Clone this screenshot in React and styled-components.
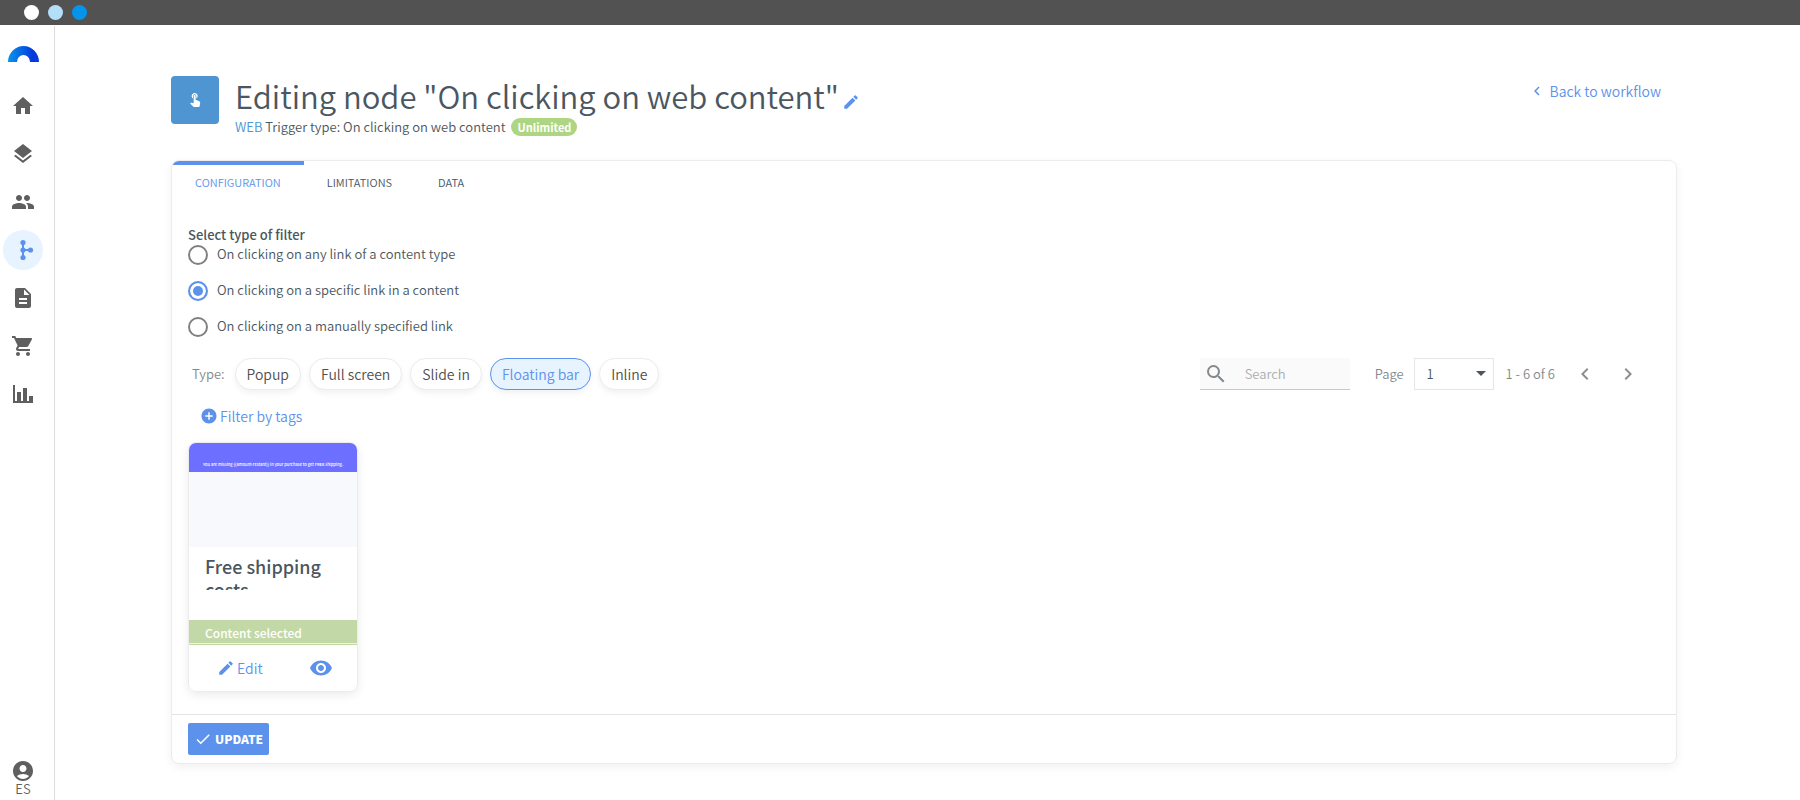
import React, { useState } from 'react';
import { styled, createGlobalStyle } from 'styled-components';
import {
  MdHome,
  MdLayers,
  MdPeople,
  MdDescription,
  MdShoppingCart,
  MdAccountCircle,
  MdTouchApp,
  MdEdit,
  MdSearch,
  MdVisibility,
  MdAddCircle,
  MdCheck,
  MdChevronLeft,
  MdChevronRight,
  MdArrowDropDown,
} from 'react-icons/md';

const WorkflowIcon = () => (
  <svg width="24" height="24" viewBox="0 0 24 24" fill="currentColor" aria-hidden="true">
    <circle cx="12" cy="4.5" r="2.6" />
    <circle cx="12" cy="12" r="2.6" />
    <circle cx="12" cy="19.5" r="2.6" />
    <circle cx="19.5" cy="12" r="2.6" />
    <path d="M11 4h2v16h-2zM12 11h8v2h-8z" />
  </svg>
);

const ChartIcon = () => (
  <svg width="24" height="24" viewBox="0 0 24 24" fill="currentColor" aria-hidden="true">
    <path d="M2 3h2v16h2v-9h4v9h2V6h4v13h2v-5h4v7H2z" />
  </svg>
);

const LogoIcon = () => (
  <svg width="31" height="16" viewBox="0 0 31 16" aria-hidden="true">
    <defs>
      <linearGradient id="logo" x1="0" y1="0" x2="1" y2="0">
        <stop offset="0" stopColor="#0a94ea" />
        <stop offset="0.45" stopColor="#0763e2" />
        <stop offset="0.8" stopColor="#0537dc" />
        <stop offset="1" stopColor="#0440dd" />
      </linearGradient>
    </defs>
    <path d="M0 16a15.5 16 0 0 1 31 0h-9a6.5 7 0 0 0-13 0z" fill="url(#logo)" />
  </svg>
);

const menu = [
  { name: 'Home', icon: <MdHome /> },
  { name: 'Layers', icon: <MdLayers /> },
  { name: 'People', icon: <MdPeople /> },
  { name: 'Workflows', icon: <WorkflowIcon />, active: true },
  { name: 'Documents', icon: <MdDescription /> },
  { name: 'Shop', icon: <MdShoppingCart /> },
  { name: 'Statistics', icon: <ChartIcon /> },
];

const tabs = ['CONFIGURATION', 'LIMITATIONS', 'DATA'];

const filters = [
  'On clicking on any link of a content type',
  'On clicking on a specific link in a content',
  'On clicking on a manually specified link',
];

const types = ['Popup', 'Full screen', 'Slide in', 'Floating bar', 'Inline'];

const App = () => {
  const [tab, setTab] = useState(tabs[0]);
  const [filter, setFilter] = useState(filters[1]);
  const [type, setType] = useState('Floating bar');

  return (
    <Page>
      <GlobalStyle />
      <WindowBar>
        <Dot $color="#ffffff" />
        <Dot $color="#b3dff9" />
        <Dot $color="#0394ec" />
      </WindowBar>
      <Body>
        <Sidebar>
          <Logo href="#" aria-label="Start">
            <LogoIcon />
          </Logo>
          {menu.map((item) => (
            <MenuItem key={item.name} href="#" aria-label={item.name} $active={item.active}>
              {item.icon}
            </MenuItem>
          ))}
          <Account href="#">
            <MdAccountCircle />
            ES
          </Account>
        </Sidebar>
        <Main>
          <Header>
            <NodeIcon>
              <MdTouchApp />
            </NodeIcon>
            <HeaderText>
              <TitleRow>
                <Title>Editing node "On clicking on web content"</Title>
                <RenameButton aria-label="Rename" $size="18px" $color="#5c92ec">
                  <MdEdit />
                </RenameButton>
              </TitleRow>
              <Subtitle>
                <span>
                  <Channel>WEB</Channel> Trigger type: On clicking on web content
                </span>
                <Badge>Unlimited</Badge>
              </Subtitle>
            </HeaderText>
            <BackLink href="#">
              <MdChevronLeft />
              Back to workflow
            </BackLink>
          </Header>

          <Panel>
            <Tabs role="tablist">
              {tabs.map((name) => (
                <Tab
                  key={name}
                  role="tab"
                  aria-selected={tab === name}
                  $active={tab === name}
                  onClick={() => setTab(name)}
                >
                  {name}
                </Tab>
              ))}
            </Tabs>
            <Content>
              <Filters>
                <Legend>Select type of filter</Legend>
                {filters.map((name) => (
                  <RadioLabel key={name}>
                    <Radio
                      type="radio"
                      name="filter"
                      checked={filter === name}
                      onChange={() => setFilter(name)}
                    />
                    {name}
                  </RadioLabel>
                ))}
              </Filters>

              <Toolbar>
                <Chips>
                  <ChipsLabel>Type:</ChipsLabel>
                  {types.map((name) => (
                    <Chip key={name} $active={type === name} onClick={() => setType(name)}>
                      {name}
                    </Chip>
                  ))}
                </Chips>
                <Search>
                  <MdSearch />
                  <SearchInput type="text" placeholder="Search" aria-label="Search" />
                </Search>
                <Pager>
                  <label htmlFor="page">Page</label>
                  <SelectBox>
                    <Select id="page">
                      <option>1</option>
                    </Select>
                    <MdArrowDropDown />
                  </SelectBox>
                  <span>1 - 6 of 6</span>
                  <PagerArrows>
                    <IconButton aria-label="Previous page" $size="24px" $color="#8b8f93">
                      <MdChevronLeft />
                    </IconButton>
                    <IconButton aria-label="Next page" $size="24px" $color="#8b8f93">
                      <MdChevronRight />
                    </IconButton>
                  </PagerArrows>
                </Pager>
              </Toolbar>

              <TagsButton>
                <MdAddCircle />
                Filter by tags
              </TagsButton>

              <Card>
                <Preview>
                  <PreviewBar>
                    {'You are missing {{amount-restant}} in your purchase to get FREE shipping.'}
                  </PreviewBar>
                </Preview>
                <CardText>
                  <CardTitle>Free shipping costs</CardTitle>
                </CardText>
                <Selected>Content selected</Selected>
                <CardActions>
                  <EditButton>
                    <MdEdit />
                    Edit
                  </EditButton>
                  <IconButton aria-label="Preview" $size="24px" $color="#5c92ec">
                    <MdVisibility />
                  </IconButton>
                </CardActions>
              </Card>
            </Content>
            <Footer>
              <UpdateButton>
                <MdCheck />
                UPDATE
              </UpdateButton>
            </Footer>
          </Panel>
        </Main>
      </Body>
    </Page>
  );
};

export default App;

const GlobalStyle = createGlobalStyle`
  * {
    box-sizing: border-box;
  }
  body {
    margin: 0;
    background: #fff;
    color: #4a5660;
    font-family: 'Noto Sans CJK SC', 'Noto Sans', sans-serif;
    font-size: 13px;
    font-weight: 350;
    line-height: 20px;
  }
  button, input, select {
    font: inherit;
    color: inherit;
    margin: 0;
  }
  button {
    cursor: pointer;
  }
  a {
    text-decoration: none;
  }
  svg {
    display: block;
    flex: none;
  }
`;
const Page = styled.div`
  display: flex;
  flex-direction: column;
  min-height: 100vh;
`;
const WindowBar = styled.div`
  display: flex;
  align-items: center;
  gap: 9px;
  height: 25px;
  padding-left: 24px;
  background: #525252;
`;
const Dot = styled.span`
  width: 15px;
  height: 15px;
  border-radius: 50%;
  background: ${({ $color }) => $color};
`;
const Body = styled.div`
  flex: 1;
  display: flex;
`;
const Sidebar = styled.nav`
  display: flex;
  flex-direction: column;
  flex: none;
  width: 55px;
  margin-top: 1px;
  padding: 20px 0 0 3px;
  border-right: 1px solid #dcdcdc;
  font-size: 24px;
`;
const Logo = styled.a`
  margin: 0 0 24px 5px;
`;
const MenuItem = styled.a`
  display: flex;
  align-items: center;
  justify-content: center;
  width: 40px;
  height: 40px;
  margin-bottom: 8px;
  border-radius: 50%;
  color: ${({ $active }) => ($active ? '#5c92ec' : '#5f5f5f')};
  background: ${({ $active }) => ($active ? '#e7f3ff' : 'transparent')};
`;
const Account = styled.a`
  display: flex;
  flex-direction: column;
  align-items: center;
  width: 40px;
  margin-top: auto;
  padding-bottom: 6px;
  color: #5f5f5f;
  font-size: 13px;
  line-height: 11px;
  svg {
    font-size: 24px;
  }
`;
const Main = styled.main`
  flex: 1;
  min-width: 0;
  padding: 51px 123px 36px 116px;
`;
const Header = styled.header`
  display: flex;
  align-items: flex-start;
  margin-bottom: 24px;
`;
const NodeIcon = styled.div`
  display: flex;
  align-items: center;
  justify-content: center;
  width: 48px;
  height: 48px;
  padding-bottom: 2px;
  border-radius: 4px;
  background: #4e95d2;
  color: #fff;
  font-size: 16px;
`;
const HeaderText = styled.div`
  flex: 1;
  padding-left: 16px;
`;
const TitleRow = styled.div`
  display: flex;
  align-items: flex-end;
  gap: 3px;
  height: 42px;
`;
const Title = styled.h1`
  margin: 0;
  font-size: 31px;
  font-weight: 350;
  line-height: 44px;
`;
const IconButton = styled.button`
  padding: 0;
  border: none;
  background: none;
  font-size: ${({ $size }) => $size};
  color: ${({ $color }) => $color};
`;
const RenameButton = styled(IconButton)`
  padding-bottom: 7px;
`;
const Subtitle = styled.div`
  display: flex;
  align-items: center;
  gap: 6px;
  height: 18px;
`;
const Channel = styled.span`
  color: #4e95d2;
`;
const Badge = styled.span`
  padding: 0 6px;
  border-radius: 9px;
  background: #aed581;
  color: #fff;
  font-size: 11px;
  font-weight: 700;
  line-height: 18px;
`;
const BackLink = styled.a`
  display: flex;
  align-items: center;
  gap: 4px;
  padding: 5px 16px 0 0;
  color: #5c92ec;
  font-size: 14px;
  svg {
    font-size: 18px;
  }
`;
const Panel = styled.section`
  border: 1px solid #ececec;
  border-radius: 8px;
  box-shadow: 0 3px 10px rgba(0, 0, 0, 0.06);
  overflow: hidden;
`;
const Tabs = styled.div`
  display: flex;
`;
const Tab = styled.button`
  height: 42px;
  padding: 0 23px 4px;
  border: none;
  border-top: 4px solid ${({ $active }) => ($active ? '#5c92ec' : 'transparent')};
  background: none;
  color: ${({ $active }) => ($active ? '#5c92ec' : '#4a5660')};
  font-size: 11px;
`;
const Content = styled.div`
  padding: 22px 24px 22px 16px;
`;
const Filters = styled.fieldset`
  display: flex;
  flex-direction: column;
  gap: 16px;
  margin: 0 0 21px;
  padding: 0;
  border: none;
`;
const Legend = styled.legend`
  padding: 0;
  font-weight: 500;
`;
const RadioLabel = styled.label`
  display: flex;
  align-items: flex-start;
  gap: 9px;
  line-height: 18px;
`;
const Radio = styled.input`
  appearance: none;
  width: 20px;
  height: 20px;
  border: 2px solid ${({ checked }) => (checked ? '#5c92ec' : '#808080')};
  border-radius: 50%;
  background: ${({ checked }) => (checked ? '#5c92ec' : '#fff')};
  box-shadow: inset 0 0 0 3px #fff;
`;
const Toolbar = styled.div`
  display: flex;
  align-items: center;
  height: 32px;
`;
const Chips = styled.div`
  display: flex;
  align-items: center;
  gap: 8px;
  flex: 1;
`;
const ChipsLabel = styled.span`
  padding: 0 2px 0 4px;
  color: #84898e;
`;
const Chip = styled.button`
  height: 32px;
  padding: 0 11px;
  border: 1px solid ${({ $active }) => ($active ? '#5c92ec' : '#ececec')};
  border-radius: 16px;
  background: ${({ $active }) => ($active ? '#e7f3ff' : '#fff')};
  color: ${({ $active }) => ($active ? '#5c92ec' : '#4f4f4f')};
  box-shadow: 0 3px 6px rgba(0, 0, 0, 0.06);
  font-size: 14px;
`;
const Search = styled.div`
  display: flex;
  align-items: center;
  gap: 17px;
  width: 150px;
  height: 32px;
  padding-left: 4px;
  border-bottom: 1px solid #c8c8c8;
  background: #fafafa;
  color: #84898e;
  svg {
    font-size: 24px;
  }
`;
const SearchInput = styled.input`
  flex: 1;
  min-width: 0;
  padding: 0;
  border: none;
  outline: none;
  background: transparent;
  &::placeholder {
    color: #a9adb1;
  }
`;
const Pager = styled.div`
  display: flex;
  align-items: center;
  padding-left: 25px;
  color: #84898e;
`;
const SelectBox = styled.div`
  position: relative;
  margin: 0 12px 0 10px;
  color: #4a5660;
  svg {
    position: absolute;
    top: 3px;
    right: 1px;
    font-size: 24px;
    pointer-events: none;
  }
`;
const Select = styled.select`
  appearance: none;
  display: block;
  width: 80px;
  height: 32px;
  padding: 0 12px;
  border: 1px solid #e6e6e6;
  border-radius: 0;
  background: #fff;
`;
const PagerArrows = styled.div`
  display: flex;
  gap: 19px;
  padding: 0 12px 0 18px;
`;
const TagsButton = styled.button`
  display: flex;
  align-items: center;
  gap: 2px;
  margin: 16px 0;
  padding: 0 0 0 12px;
  border: none;
  background: none;
  color: #5c92ec;
  font-size: 14px;
  svg {
    font-size: 18px;
  }
`;
const Card = styled.article`
  width: 170px;
  border: 1px solid #ececec;
  border-radius: 8px;
  box-shadow: 0 3px 10px rgba(0, 0, 0, 0.08);
  overflow: hidden;
`;
const Preview = styled.div`
  height: 104px;
  background: #f7f9fc;
`;
const PreviewBar = styled.div`
  height: 29px;
  padding-top: 16px;
  background: #6c6fff;
  color: #fff;
  font-size: 4px;
  font-weight: 500;
  line-height: 10px;
  text-align: center;
  white-space: nowrap;
`;
const CardText = styled.div`
  height: 73px;
  padding: 8px 16px 0;
`;
const CardTitle = styled.h2`
  height: 35px;
  margin: 0;
  font-size: 18px;
  font-weight: 500;
  line-height: 23px;
  overflow: hidden;
`;
const Selected = styled.div`
  height: 25px;
  padding: 3px 16px 0;
  background: linear-gradient(#c2d8a6 23px, #edf4e5 23px, #edf4e5 24px, #c2d8a6 24px);
  color: #fff;
  font-size: 12px;
  font-weight: 500;
`;
const CardActions = styled.div`
  display: flex;
  align-items: center;
  justify-content: space-between;
  height: 46px;
  padding: 0 24px 0 28px;
`;
const EditButton = styled.button`
  display: flex;
  align-items: center;
  gap: 2px;
  padding: 0;
  border: none;
  background: none;
  color: #5c92ec;
  font-size: 14px;
  svg {
    font-size: 18px;
  }
`;
const Footer = styled.footer`
  padding: 8px 16px;
  border-top: 1px solid #e4e4e4;
`;
const UpdateButton = styled.button`
  display: flex;
  align-items: center;
  gap: 3px;
  height: 32px;
  padding: 0 6px;
  border: none;
  border-radius: 2px;
  background: #5c92ec;
  color: #fff;
  font-size: 12px;
  font-weight: 900;
  svg {
    font-size: 18px;
  }
`;
